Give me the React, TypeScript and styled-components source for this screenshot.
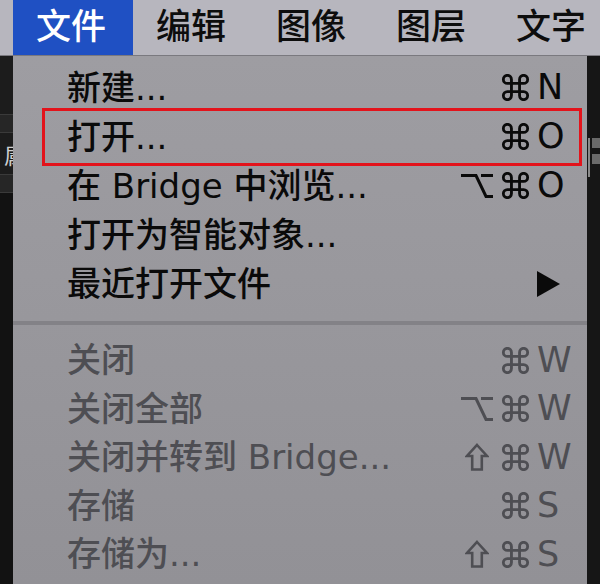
import styled, { createGlobalStyle } from "styled-components";

const GlobalStyle = createGlobalStyle`
  html, body {
    margin: 0;
    padding: 0;
    background: #141414;
  }
  body {
    width: 600px;
    height: 584px;
    overflow: hidden;
    font-family: "DejaVu Sans", "Noto Sans CJK SC", sans-serif;
  }
`;

type ModKey = "cmd" | "opt" | "shift";

type MenuEntry = {
  label: string;
  mods?: ModKey[];
  keyChar?: string;
  submenu?: boolean;
  marked?: boolean;
};

const topItems = ["文件", "编辑", "图像", "图层", "文字"];

const openGroup: MenuEntry[] = [
  { label: "新建...", mods: ["cmd"], keyChar: "N" },
  { label: "打开...", mods: ["cmd"], keyChar: "O", marked: true },
  { label: "在 Bridge 中浏览...", mods: ["opt", "cmd"], keyChar: "O" },
  { label: "打开为智能对象..." },
  { label: "最近打开文件", submenu: true },
];

const closeGroup: MenuEntry[] = [
  { label: "关闭", mods: ["cmd"], keyChar: "W" },
  { label: "关闭全部", mods: ["opt", "cmd"], keyChar: "W" },
  { label: "关闭并转到 Bridge...", mods: ["shift", "cmd"], keyChar: "W" },
  { label: "存储", mods: ["cmd"], keyChar: "S" },
  { label: "存储为...", mods: ["shift", "cmd"], keyChar: "S" },
];

// modifier glyphs drawn as icons so stroke weight matches the mac menu
const ModIcon = ({ kind }: { kind: ModKey }) => {
  if (kind === "cmd")
    return (
      <svg width="29" height="27" viewBox="2 2 20 20" fill="none" stroke="currentColor" strokeWidth="2.1">
        <path d="M15 6v12a3 3 0 1 0 3-3H6a3 3 0 1 0 3 3V6a3 3 0 1 0-3 3h12a3 3 0 1 0-3-3" />
      </svg>
    );
  if (kind === "opt")
    return (
      <svg width="32" height="26" viewBox="0 0 32 26" fill="none" stroke="currentColor" strokeWidth="3">
        <path d="M0 2.5H15L25 23.5H32" />
        <path d="M20 2.5H32" />
      </svg>
    );
  return (
    <svg width="24" height="28" viewBox="0 0 24 28" fill="none" stroke="currentColor" strokeWidth="2.6">
      <path d="M12 2L22 13H16.8V26.5H7.2V13H2Z" strokeLinejoin="miter" />
    </svg>
  );
};

const MenuGroup = ({
  items,
  disabled,
  rowHeight,
}: {
  items: MenuEntry[];
  disabled?: boolean;
  rowHeight: number;
}) => (
  <Group>
    {items.map((item) => (
      <Row key={item.label} disabled={disabled} marked={item.marked} h={rowHeight}>
        <Label>{item.label}</Label>
        <Mods>
          {item.mods?.map((m) => (
            <Mod key={m}>
              <ModIcon kind={m} />
            </Mod>
          ))}
        </Mods>
        <KeyCell>
          {item.keyChar}
          {item.submenu && (
            <svg width="24" height="26" viewBox="0 0 24 26">
              <polygon points="0,0 23,13 0,26" fill="#0a0a0a" />
            </svg>
          )}
        </KeyCell>
      </Row>
    ))}
  </Group>
);

const App = () => {
  return (
    <>
      <GlobalStyle />
      <Screen>
        <MenuBar>
          {topItems.map((t, i) => (
            <TopItem key={t} active={i === 0}>
              {t}
            </TopItem>
          ))}
        </MenuBar>
        <Body>
          <LeftStrip>
            <StripBand height={59} />
            <StripBand height={18} light />
            <StripBand height={42}>
              <StripGlyph>属</StripGlyph>
            </StripBand>
            <StripBand height={18} light />
          </LeftStrip>
          <MenuPanel>
            <MenuGroup items={openGroup} rowHeight={49} />
            <Separator />
            <MenuGroup items={closeGroup} rowHeight={48.5} disabled />
          </MenuPanel>
          <RightStrip>
            <ScrollTrack>
              <ScrollLine />
              <Tabs>
                <TabChip />
                <TabChip />
              </Tabs>
            </ScrollTrack>
          </RightStrip>
        </Body>
      </Screen>
    </>
  );
};
export default App;

const Screen = styled.div`
  width: 600px;
  height: 584px;
  display: flex;
  flex-direction: column;
  overflow: hidden;
`;

const MenuBar = styled.div`
  height: 56px;
  flex-shrink: 0;
  box-sizing: border-box;
  padding-left: 13px;
  background-color: #b7b6be;
  border-bottom: 1px solid #7a797f;

  display: flex;
  flex-direction: row;
  align-items: stretch;
`;

const TopItem = styled.div<{ active: boolean }>`
  width: 120px;
  flex-shrink: 0;
  box-sizing: border-box;
  padding-left: 23px;

  display: flex;
  align-items: center;

  font-size: 35px;
  font-weight: 500;
  line-height: 1;
  color: ${(p) => (p.active ? "#ffffff" : "#0d0d0d")};
  background-color: ${(p) => (p.active ? "#1f50c3" : "transparent")};
`;

const Body = styled.div`
  flex: 1;
  display: flex;
  flex-direction: row;
`;

const LeftStrip = styled.div`
  width: 13px;
  background-color: #121212;
  display: flex;
  flex-direction: column;
  overflow: hidden;
`;

const StripBand = styled.div<{ height: number; light?: boolean }>`
  height: ${(p) => p.height}px;
  box-sizing: border-box;
  border-bottom: 1px solid #3a3a3a;
  background-color: ${(p) => (p.light ? "#262626" : "#1c1c1c")};
  display: flex;
  align-items: center;
  overflow: hidden;
`;

const StripGlyph = styled.span`
  padding-left: 4px;
  font-size: 22px;
  color: #cfcfcf;
  white-space: nowrap;
`;

const MenuPanel = styled.div`
  width: 574px;
  box-sizing: border-box;
  padding-top: 7px;
  background: linear-gradient(#9e9da2, #929196);

  display: flex;
  flex-direction: column;
`;

const Group = styled.div`
  box-sizing: border-box;
  padding: 0 13px 0 54px;
  display: flex;
  flex-direction: column;
`;

const Row = styled.div<{ disabled?: boolean; marked?: boolean; h: number }>`
  height: ${(p) => p.h}px;
  position: relative;

  display: flex;
  flex-direction: row;
  align-items: center;

  color: ${(p) => (p.disabled ? "#4e4e53" : "#0a0a0a")};
  font-size: 34px;
  font-weight: 500;
  line-height: 1;

  ${(p) =>
    p.marked &&
    `
    &::after {
      content: "";
      position: absolute;
      top: -4px;
      bottom: -5px;
      left: -25px;
      right: -8px;
      border: 3px solid #e3131b;
    }
  `}
`;

const Label = styled.span`
  flex: 1;
  white-space: nowrap;
`;

const Mods = styled.span`
  display: flex;
  flex-direction: row;
  margin-right: 3px;
`;

const Mod = styled.span`
  width: 38px;
  display: flex;
  justify-content: center;
  align-items: center;
`;

const KeyCell = styled.span`
  width: 37px;
  display: flex;
  align-items: center;
  font-size: 35px;
`;

const Separator = styled.div`
  height: 4px;
  margin: 13px 0 11px;
  background-color: #838287;
`;

const RightStrip = styled.div`
  flex: 1;
  background-color: #161616;
  display: flex;
  flex-direction: column;
  padding-top: 82px;
`;

const ScrollTrack = styled.div`
  display: flex;
  flex-direction: row;
  gap: 2px;
`;

const ScrollLine = styled.div`
  width: 2px;
  height: 39px;
  margin-left: 1px;
  background-color: #8a8a8a;
`;

const Tabs = styled.div`
  flex: 1;
  display: flex;
  flex-direction: column;
  gap: 6px;
`;

const TabChip = styled.div`
  height: 10px;
  background-color: #6a6a6a;
`;
